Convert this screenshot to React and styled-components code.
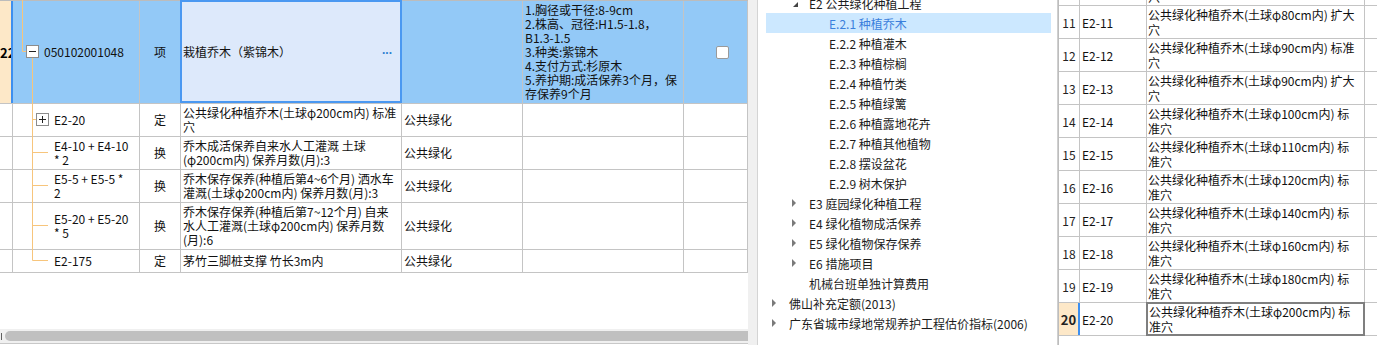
import React from "react";
import styled, { createGlobalStyle } from "styled-components";

const GlobalStyle = createGlobalStyle`
  html, body { margin: 0; padding: 0; background: #fff; }
  body { font-family: "Noto Sans CJK SC", "Liberation Sans", sans-serif; font-size: 12px; color: #000; }
`;

const leftCols = "13px 127px 41px 221px 121px 161px 64px";

const subRows = [
  { h: 33, code: ["E2-20"], type: "定", name: ["公共绿化种植乔木(土球φ200cm内) 标准", "穴"], major: "公共绿化" },
  { h: 33, code: ["E4-10 + E4-10", "* 2"], type: "换", name: ["乔木成活保养自来水人工灌溉 土球", "(φ200cm内)  保养月数(月):3"], major: "公共绿化" },
  { h: 33, code: ["E5-5 + E5-5 *", "2"], type: "换", name: ["乔木保存保养(种植后第4~6个月) 洒水车", "灌溉(土球φ200cm内)  保养月数(月):3"], major: "公共绿化" },
  { h: 47, code: ["E5-20 + E5-20", "* 5"], type: "换", name: ["乔木保存保养(种植后第7~12个月) 自来", "水人工灌溉(土球φ200cm内)  保养月数", "(月):6"], major: "公共绿化" },
  { h: 23, code: ["E2-175"], type: "定", name: ["茅竹三脚桩支撑 竹长3m内"], major: "公共绿化" },
];

const features = [
  "1.胸径或干径:8-9cm",
  "2.株高、冠径:H1.5-1.8，",
  "B1.3-1.5",
  "3.种类:紫锦木",
  "4.支付方式:杉原木",
  "5.养护期:成活保养3个月，保",
  "存保养9个月",
];

const treeItems = [
  { level: 1, text: "E2 公共绿化种植工程", arrow: "open" },
  { level: 2, text: "E.2.1 种植乔木", selected: true },
  { level: 2, text: "E.2.2 种植灌木" },
  { level: 2, text: "E.2.3 种植棕榈" },
  { level: 2, text: "E.2.4 种植竹类" },
  { level: 2, text: "E.2.5 种植绿篱" },
  { level: 2, text: "E.2.6 种植露地花卉" },
  { level: 2, text: "E.2.7 种植其他植物" },
  { level: 2, text: "E.2.8 摆设盆花" },
  { level: 2, text: "E.2.9 树木保护" },
  { level: 1, text: "E3 庭园绿化种植工程", arrow: "closed" },
  { level: 1, text: "E4 绿化植物成活保养", arrow: "closed" },
  { level: 1, text: "E5 绿化植物保存保养", arrow: "closed" },
  { level: 1, text: "E6 措施项目", arrow: "closed" },
  { level: 1, text: "机械台班单独计算费用" },
  { level: 0, text: "佛山补充定额(2013)", arrow: "closed" },
  { level: 0, text: "广东省城市绿地常规养护工程估价指标(2006)", arrow: "closed" },
];

const quotaRows = [
  { n: 10, code: "E2-10", name: ["公共绿化种植乔木(土球φ80cm内) 标准", "穴"] },
  { n: 11, code: "E2-11", name: ["公共绿化种植乔木(土球φ80cm内) 扩大", "穴"] },
  { n: 12, code: "E2-12", name: ["公共绿化种植乔木(土球φ90cm内) 标准", "穴"] },
  { n: 13, code: "E2-13", name: ["公共绿化种植乔木(土球φ90cm内) 扩大", "穴"] },
  { n: 14, code: "E2-14", name: ["公共绿化种植乔木(土球φ100cm内) 标", "准穴"] },
  { n: 15, code: "E2-15", name: ["公共绿化种植乔木(土球φ110cm内) 标", "准穴"] },
  { n: 16, code: "E2-16", name: ["公共绿化种植乔木(土球φ120cm内) 标", "准穴"] },
  { n: 17, code: "E2-17", name: ["公共绿化种植乔木(土球φ140cm内) 标", "准穴"] },
  { n: 18, code: "E2-18", name: ["公共绿化种植乔木(土球φ160cm内) 标", "准穴"] },
  { n: 19, code: "E2-19", name: ["公共绿化种植乔木(土球φ180cm内) 标", "准穴"] },
  { n: 20, code: "E2-20", name: ["公共绿化种植乔木(土球φ200cm内) 标", "准穴"], selected: true },
];

function Lines({ lines }) {
  return (
    <div>
      {lines.map((l, i) => (
        <Line key={i}>{l}</Line>
      ))}
    </div>
  );
}

function TreeConnectors() {
  const c = "#f7c57c";
  return (
    <Connectors width="60" height="280" viewBox="0 0 60 280">
      <path d="M22.5 0V51.5H26.5" stroke={c} fill="none" />
      <path d="M32.5 57.5V260.5" stroke={c} fill="none" />
      <path d="M32.5 119.5H36.5M32.5 152.5H48M32.5 185.5H48M32.5 225.5H48M32.5 260.5H48" stroke={c} fill="none" />
      <rect x="26.5" y="45.5" width="12" height="12" fill="#fff" stroke="#8c8c8c" />
      <path d="M29 51.5H36" stroke="#222" />
      <rect x="36.5" y="113.5" width="12" height="12" fill="#fff" stroke="#8c8c8c" />
      <path d="M39 119.5H46M42.5 116V123" stroke="#222" />
    </Connectors>
  );
}

export default function App() {
  return (
    <Page>
      <GlobalStyle />
      <LeftPanel>
        <TableArea>
          <Grid>
            <TreeConnectors />
            <Row $h={103} $selected>
              <NumCell $selected>22</NumCell>
              <Cell $pad={31}>050102001048</Cell>
              <Cell $center>项</Cell>
              <NameEditCell>
                <span>栽植乔木（紫锦木）</span>
                <Dots>...</Dots>
              </NameEditCell>
              <Cell />
              <Cell>
                <Lines lines={features} />
              </Cell>
              <CheckCell>
                <CheckBox />
              </CheckCell>
            </Row>
            {subRows.map((r, i) => (
              <Row key={i} $h={r.h}>
                <NumCell />
                <Cell $pad={41}>
                  <Lines lines={r.code} />
                </Cell>
                <Cell $center>{r.type}</Cell>
                <Cell>
                  <Lines lines={r.name} />
                </Cell>
                <Cell>{r.major}</Cell>
                <Cell />
                <Cell />
              </Row>
            ))}
          </Grid>
          <Filler />
          <HScroll>
            <ScrollArrow />
            <Thumb />
          </HScroll>
        </TableArea>
        <VStrip />
      </LeftPanel>

      <TreePanel>
        <TreeList>
          {treeItems.map((t, i) => (
            <TreeRow key={i} $selected={t.selected}>
              <TreeIndent $level={t.level} />
              <ArrowSlot>{t.arrow === "open" ? <OpenArrow /> : t.arrow === "closed" ? <ClosedArrow /> : null}</ArrowSlot>
              <TreeText $selected={t.selected}>{t.text}</TreeText>
            </TreeRow>
          ))}
        </TreeList>
      </TreePanel>

      <QuotaPanel>
        <QuotaList>
          {quotaRows.map((r) => (
            <QuotaRow key={r.n}>
              <QuotaNum $selected={r.selected}>{r.n}</QuotaNum>
              <QuotaCode>{r.code}</QuotaCode>
              <QuotaName $selected={r.selected}>
                <Lines lines={r.name} />
              </QuotaName>
              <QuotaTail />
            </QuotaRow>
          ))}
        </QuotaList>
      </QuotaPanel>
    </Page>
  );
}

const Page = styled.div`
  display: flex;
  width: 1377px;
  height: 345px;
  overflow: hidden;
  background: #fff;
`;

const LeftPanel = styled.div`
  display: flex;
  width: 758px;
  flex-shrink: 0;
  height: 100%;
`;

const TableArea = styled.div`
  display: flex;
  flex-direction: column;
  width: 748px;
  height: 100%;
`;

const Grid = styled.div`
  position: relative;
  border-top: 1px solid #bcbcbc;
`;

const Connectors = styled.svg`
  position: absolute;
  left: 0;
  top: -1px;
  pointer-events: none;
  z-index: 2;
`;

const Row = styled.div`
  display: grid;
  grid-template-columns: ${leftCols};
  height: ${(p) => p.$h}px;
  box-sizing: border-box;
  border-bottom: 1px solid #c4c4c4;
  background: ${(p) => (p.$selected ? "#93c9f7" : "#fff")};
`;

const Cell = styled.div`
  box-sizing: border-box;
  border-right: 1px solid #c4c4c4;
  display: flex;
  align-items: center;
  justify-content: ${(p) => (p.$center ? "center" : "flex-start")};
  padding-left: ${(p) => (p.$center ? 0 : p.$pad || 2)}px;
  font-size: 12px;
  line-height: 14px;
  color: #111;
  white-space: nowrap;
  overflow: hidden;
`;

const CheckCell = styled(Cell)`
  justify-content: center;
  padding-left: 14px;
`;

const Line = styled.div`
  white-space: nowrap;
`;

const NumCell = styled.div`
  box-sizing: border-box;
  border-right: ${(p) => (p.$selected ? "2px solid #3d8ff0" : "1px solid #c4c4c4")};
  background: ${(p) => (p.$selected ? "#fde8c8" : "#fff")};
  display: flex;
  align-items: center;
  justify-content: flex-end;
  overflow: hidden;
  font-weight: bold;
  font-size: 13px;
  padding-right: 1px;
  direction: rtl;
`;

const NameEditCell = styled.div`
  box-sizing: border-box;
  margin-left: -1px;
  margin-top: -1px;
  background: #dde9fb;
  border: 2px solid #4a98f1;
  display: flex;
  align-items: center;
  justify-content: space-between;
  padding: 0 8px 0 1px;
  font-size: 12px;
  color: #111;
  white-space: nowrap;
`;

const Dots = styled.span`
  color: #2f7fd0;
  font-family: "Liberation Sans", sans-serif;
  font-weight: bold;
  font-size: 12px;
  line-height: 1;
  margin-top: -4px;
`;

const CheckBox = styled.div`
  width: 13px;
  height: 13px;
  box-sizing: border-box;
  border: 1px solid #9a9a9a;
  border-radius: 2px;
  background: #fff;
`;

const Filler = styled.div`
  flex: 1;
`;

const HScroll = styled.div`
  display: flex;
  align-items: center;
  height: 14px;
  margin-bottom: 1px;
  background: #f0f0f0;
  border-bottom: 1px solid #c8c8c8;
`;

const ScrollArrow = styled.div`
  width: 1px;
  height: 7px;
  margin-left: 1px;
  background: #606060;
`;

const Thumb = styled.div`
  flex: 1;
  height: 10px;
  margin-left: 3px;
  background: #c0c0c0;
  border-radius: 5px 0 0 5px;
`;

const VStrip = styled.div`
  width: 10px;
  box-sizing: border-box;
  background: #f0f0f0;
  border-right: 1px solid #d4d4d4;
`;

const TreePanel = styled.div`
  width: 300px;
  flex-shrink: 0;
  height: 100%;
  box-sizing: border-box;
  border-right: 1px solid #cfcfcf;
  overflow: hidden;
`;

const TreeList = styled.div`
  margin-top: -7px;
  padding: 0 6px 0 8px;
`;

const TreeRow = styled.div`
  display: flex;
  align-items: center;
  height: 20px;
  background: ${(p) => (p.$selected ? "#cce8ff" : "transparent")};
`;

const TreeIndent = styled.div`
  width: ${(p) => p.$level * 20}px;
  flex-shrink: 0;
`;

const ArrowSlot = styled.div`
  width: 23px;
  flex-shrink: 0;
  display: flex;
  align-items: center;
  padding-left: 6px;
  box-sizing: border-box;
`;

const ClosedArrow = styled.div`
  width: 0;
  height: 0;
  border-top: 4px solid transparent;
  border-bottom: 4px solid transparent;
  border-left: 4px solid #7a7a7a;
`;

const OpenArrow = styled.div`
  width: 0;
  height: 0;
  margin-left: 1px;
  margin-top: 2px;
  border-left: 5px solid transparent;
  border-bottom: 5px solid #444;
`;

const TreeText = styled.span`
  font-size: 12px;
  white-space: nowrap;
  color: ${(p) => (p.$selected ? "#3a7fdc" : "#1c1c1c")};
`;

const QuotaPanel = styled.div`
  flex: 1;
  height: 100%;
  overflow: hidden;
  border-left: 1px solid #bdbdbd;
`;

const QuotaList = styled.div`
  margin-top: -27px;
`;

const QuotaRow = styled.div`
  display: grid;
  grid-template-columns: 21px 67px 218px 1fr;
  height: 33px;
  box-sizing: border-box;
  border-bottom: 1px solid #c4c4c4;
`;

const QuotaNum = styled.div`
  box-sizing: border-box;
  display: flex;
  align-items: center;
  justify-content: center;
  background: ${(p) => (p.$selected ? "#fde8c8" : "#fff")};
  border-right: ${(p) => (p.$selected ? "2px solid #3d8ff0" : "1px solid #c4c4c4")};
  font-size: ${(p) => (p.$selected ? "13px" : "12px")};
  font-weight: ${(p) => (p.$selected ? "bold" : "normal")};
  color: #222;
`;

const QuotaCode = styled.div`
  box-sizing: border-box;
  display: flex;
  align-items: center;
  padding-left: 2px;
  border-right: 1px solid #c4c4c4;
  font-size: 12px;
  color: #111;
`;

const QuotaName = styled.div`
  box-sizing: border-box;
  display: flex;
  align-items: center;
  padding-left: 1px;
  border-right: 1px solid #c4c4c4;
  font-size: 12px;
  line-height: 15px;
  color: #111;
  overflow: hidden;
  ${(p) =>
    p.$selected &&
    `
    border: 2px solid #7f7f7f;
    margin: -1px 0 0 -1px;
    height: calc(100% + 2px);
  `}
`;

const QuotaTail = styled.div`
  background: #fff;
`;
